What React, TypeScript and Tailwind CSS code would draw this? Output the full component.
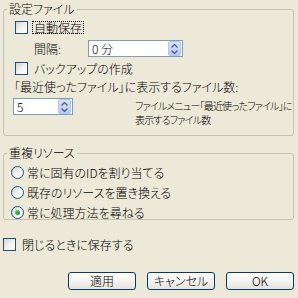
import React from "react";

const FONT = "font-['Noto_Sans_CJK_JP','Liberation_Sans',sans-serif] [font-feature-settings:'palt'] font-light";

function CheckBox() {
  return (
    <span className="block w-[13px] h-[13px] shrink-0 border border-[#1c5180] bg-gradient-to-br from-[#d6d5cd] via-[#f2f2ee] to-white" />
  );
}

function Radio({ checked }: { checked?: boolean }) {
  return (
    <span className="flex items-center justify-center w-[13px] h-[13px] shrink-0 rounded-full border border-[#1c5180] bg-gradient-to-br from-[#d2d1c9] via-[#f3f3ef] to-white">
      {checked && (
        <span className="block w-[5px] h-[5px] rounded-full bg-gradient-to-br from-[#5cd35c] to-[#1d8f1d]" />
      )}
    </span>
  );
}

function Spinner() {
  return (
    <span className="flex flex-col items-center justify-center gap-[2px] w-[13px] h-[15px] rounded-[2px] border border-[#b3c6f1] bg-gradient-to-b from-[#d7e2fb] to-[#b6c9f5]">
      <svg width="7" height="4" viewBox="0 0 7 4">
        <path d="M0.5 3.5 L3.5 0.5 L6.5 3.5" fill="none" stroke="#4d6185" strokeWidth="1.3" />
      </svg>
      <svg width="7" height="4" viewBox="0 0 7 4">
        <path d="M0.5 0.5 L3.5 3.5 L6.5 0.5" fill="none" stroke="#4d6185" strokeWidth="1.3" />
      </svg>
    </span>
  );
}

function SpinInput({ value, width }: { value: string; width: string }) {
  return (
    <div className={`flex items-center justify-between h-[17px] border border-[#7f9db9] bg-white pl-[3px] pr-[1px] ${width}`}>
      <span className="text-[12px] leading-[14px] text-black">{value}</span>
      <Spinner />
    </div>
  );
}

function XpButton({ label }: { label: string }) {
  return (
    <button
      type="button"
      className="flex items-center justify-center w-[68px] h-[18px] rounded-[3px] border border-[#003c74] bg-gradient-to-b from-white via-[#f4f3ee] to-[#e3e2da] text-[12px] leading-[14px] text-black"
    >
      {label}
    </button>
  );
}

function GroupBox({ title, className, children }: { title: string; className: string; children: React.ReactNode }) {
  return (
    <div className={`relative mx-[3px] w-[291px] border border-[#c4c3b4] rounded-[3px] ${className}`}>
      <span className="absolute -top-[8px] left-[3px] px-[2px] bg-[#ece9d8] leading-[14px]">{title}</span>
      {children}
    </div>
  );
}

export default function App() {
  return (
    <div className={`w-[298px] h-[298px] bg-[#ece9d8] overflow-hidden pt-[9px] text-[12px] leading-[14px] text-black ${FONT}`}>
      <GroupBox title="設定ファイル" className="h-[127px]">
        <div className="flex items-center h-[13px] mt-[11px] pl-[11px]">
          <CheckBox />
          <span className="ml-[4px] h-[13px] px-[1px] leading-[11px] border border-dotted border-black">自動保存</span>
        </div>

        <div className="flex items-center h-[17px] mt-[6px] pl-[30px]">
          <span className="w-[54px]">間隔:</span>
          <SpinInput value="0 分" width="w-[95px]" />
        </div>

        <div className="flex items-center h-[13px] mt-[5px] pl-[11px]">
          <CheckBox />
          <span className="ml-[6px]">バックアップの作成</span>
        </div>

        <div className="mt-[5px] pl-[10px] whitespace-nowrap">「最近使ったファイル」に表示するファイル数:</div>

        <div className="flex items-start mt-[4px] pl-[9px]">
          <SpinInput value="5" width="w-[60px]" />
          <div className="ml-[62px] mt-[1px] text-[10px] leading-[14px] tracking-[-0.8px] whitespace-nowrap">
            <div>ファイルメニュー「最近使ったファイル」に</div>
            <div>表示するファイル数</div>
          </div>
        </div>
      </GroupBox>

      <GroupBox title="重複リソース" className="h-[67px] mt-[17px]">
        <div className="flex flex-col gap-[7px] mt-[12px] pl-[7px]">
          <div className="flex items-center h-[13px] gap-[3px]">
            <Radio />
            <span>常に固有のIDを割り当てる</span>
          </div>
          <div className="flex items-center h-[13px] gap-[3px]">
            <Radio />
            <span>既存のリソースを置き換える</span>
          </div>
          <div className="flex items-center h-[13px] gap-[3px]">
            <Radio checked />
            <span>常に処理方法を尋ねる</span>
          </div>
        </div>
      </GroupBox>

      <div className="flex items-center h-[13px] mt-[18px] pl-[3px]">
        <CheckBox />
        <span className="ml-[6px]">閉じるときに保存する</span>
      </div>

      <div className="flex justify-end gap-[11px] mt-[21px] pr-[4px]">
        <XpButton label="適用" />
        <XpButton label="キャンセル" />
        <XpButton label="OK" />
      </div>
    </div>
  );
}
